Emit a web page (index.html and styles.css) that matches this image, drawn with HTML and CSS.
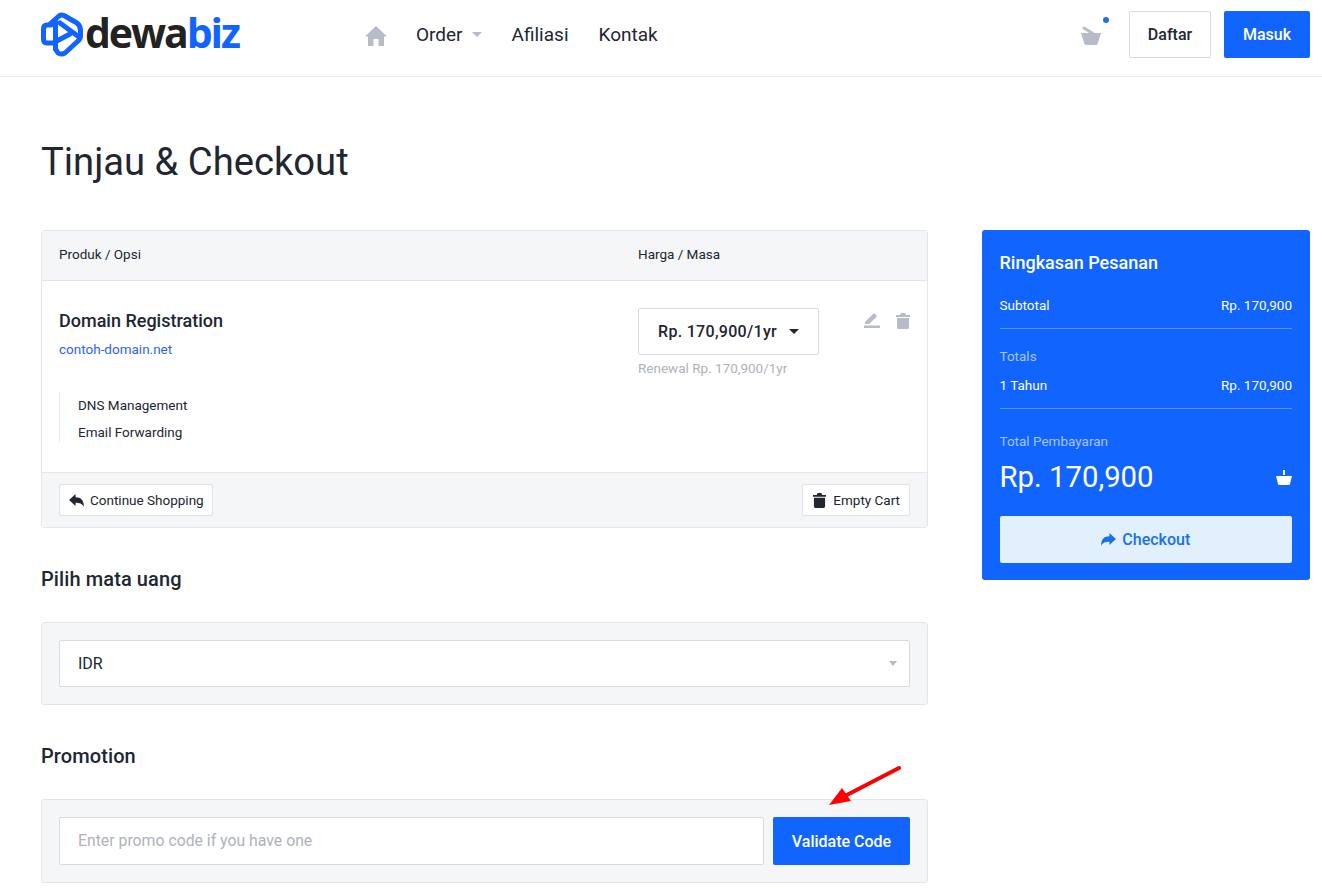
FILE: index.html
```html
<!DOCTYPE html>
<html lang="en">
<head>
    <meta charset="UTF-8">
    <meta name="viewport" content="width=device-width, initial-scale=1.0">
    <title>Tinjau &amp; Checkout</title>
    <link rel="stylesheet" href="styles.css">
</head>
<body>
    <header class="topbar">
        <a class="logo">
            <svg class="logo-mark" viewBox="0 0 42 45" width="42" height="45">
                <g fill="none" stroke="#1264ff" stroke-width="5" stroke-linecap="round" stroke-linejoin="round">
                    <path d="M10 13 H6 Q2.500 13 2.500 17 V27 Q2.500 31 6 31 H10"/>
                    <path d="M14.500 9 V37"/>
                    <path d="M9 12 L18 4 Q20 2.500 23 3.500 L36 11 Q39.500 14 39.500 18 V24 Q39.500 27 37 29 L24 41 Q20 43 17 41 L14.500 37"/>
                    <path d="M19 11 L38 25"/>
                    <path d="M12 31 L29 22"/>
                </g>
            </svg>
            <span class="logo-text">dewa<span class="logo-blue">biz</span></span>
        </a>
        <nav class="nav">
            <svg class="nav-home" viewBox="0 0 22 20" width="22" height="20"><path d="M11 0 L22 10.500 H19 V20 H13.500 V13 H8.500 V20 H3 V10.500 H0 Z" fill="#b8bcc8"/></svg>
            <a class="nav-link nav-order">Order <span class="caret caret-grey"></span></a>
            <a class="nav-link">Afiliasi</a>
            <a class="nav-link">Kontak</a>
        </nav>
        <div class="topbar-right">
            <div class="cart">
                <svg viewBox="0 0 22 19" width="22" height="19">
                    <path d="M1 7 H21 L17.500 18 Q17 19 16 19 H6 Q5 19 4.500 18 Z" fill="#b8bcc8"/>
                    <path d="M4 2 L12 7" stroke="#b8bcc8" stroke-width="3" stroke-linecap="round"/>
                </svg>
                <span class="cart-dot"></span>
            </div>
            <a class="btn btn-outline">Daftar</a>
            <a class="btn btn-primary">Masuk</a>
        </div>
    </header>

    <main class="page">
        <h1 class="title">Tinjau &amp; Checkout</h1>
        <div class="columns">
            <div class="main-col">
                <section class="card cart-table">
                    <div class="cart-head">
                        <div class="col-product">Produk / Opsi</div>
                        <div class="col-price">Harga / Masa</div>
                    </div>
                    <div class="cart-row">
                        <div class="col-product">
                            <div class="product-name">Domain Registration</div>
                            <a class="product-domain">contoh-domain.net</a>
                            <ul class="addons">
                                <li>DNS Management</li>
                                <li>Email Forwarding</li>
                            </ul>
                        </div>
                        <div class="col-price">
                            <div class="price-select">Rp. 170,900/1yr <span class="caret caret-dark"></span></div>
                            <div class="renewal">Renewal Rp. 170,900/1yr</div>
                        </div>
                        <div class="row-actions">
                            <svg viewBox="0 0 16 15" width="16" height="15"><path d="M0 12.500 H16 V15 H0 Z M1 9 L9 1 Q10 0 11 1 L12.500 2.500 Q13 3.500 12.500 4 L5 11 H1 Z" fill="#b8bcc8"/></svg>
                            <svg viewBox="0 0 14 16" width="14" height="16"><path d="M0 2 H4 L5 0 H9 L10 2 H14 V4 H0 Z M1 5 H13 V14.500 Q13 16 11.500 16 H2.500 Q1 16 1 14.500 Z" fill="#b8bcc8"/></svg>
                        </div>
                    </div>
                    <div class="cart-foot">
                        <a class="btn-small">
                            <svg viewBox="0 0 16 14" width="15" height="13"><path d="M7 0 V3.500 C13 3.500 16 7 16 14 C14.500 10.500 11 9.500 7 9.500 V13 L0 6.500 Z" fill="#212631"/></svg>
                            Continue Shopping
                        </a>
                        <a class="btn-small btn-empty">
                            <svg viewBox="0 0 14 16" width="13" height="15"><path d="M0 2 H4 L5 0 H9 L10 2 H14 V4 H0 Z M1 5 H13 V14.500 Q13 16 11.500 16 H2.500 Q1 16 1 14.500 Z" fill="#212631"/></svg>
                            Empty Cart
                        </a>
                    </div>
                </section>

                <h2 class="section-title">Pilih mata uang</h2>
                <section class="card box">
                    <div class="field field-select">IDR <span class="caret caret-small"></span></div>
                </section>

                <h2 class="section-title">Promotion</h2>
                <section class="card box promo">
                    <div class="field promo-input">Enter promo code if you have one</div>
                    <a class="btn btn-primary btn-validate">Validate Code</a>
                </section>
            </div>

            <aside class="summary">
                <h3 class="summary-title">Ringkasan Pesanan</h3>
                <div class="summary-line"><span>Subtotal</span><span>Rp. 170,900</span></div>
                <div class="summary-group">
                    <div class="summary-label">Totals</div>
                    <div class="summary-line"><span>1 Tahun</span><span>Rp. 170,900</span></div>
                </div>
                <div class="summary-total">
                    <div class="summary-label">Total Pembayaran</div>
                    <div class="total-row">
                        <span class="total-amount">Rp. 170,900</span>
                        <svg viewBox="0 0 16 15" width="16" height="15"><path d="M7 0 H9 V5 H7 Z M0 6 H16 L14 14 Q13.800 15 13 15 H3 Q2.200 15 2 14 Z" fill="#fff"/></svg>
                    </div>
                </div>
                <a class="btn-checkout">
                    <svg viewBox="0 0 16 14" width="15" height="13"><path d="M9 0 V3.500 C3 3.500 0 7 0 14 C1.500 10.500 5 9.500 9 9.500 V13 L16 6.500 Z" fill="#1673e6"/></svg>
                    Checkout
                </a>
            </aside>
        </div>
    </main>

    <svg class="arrow" viewBox="0 0 80 44" width="80" height="44">
        <path d="M70 2 L14 31" stroke="#f00" stroke-width="4" stroke-linecap="round" fill="none"/>
        <path d="M0 39 L13 22 L22 35 Z" fill="#f00"/>
    </svg>
</body>
</html>
```

FILE: styles.css
```css
body {
    margin: 0;
    font-family: 'Roboto', sans-serif;
    color: #212631;
    background: #fff;
    position: relative;
    height: 890px;
    overflow: hidden;
}
.topbar {
    height: 77px;
    box-sizing: border-box;
    border-bottom: 1px solid #e8e9eb;
    display: flex;
    align-items: center;
    padding: 0 12px 7px 41px;
}
.logo {
    display: flex;
    align-items: center;
    width: 324px;
    flex-shrink: 0;
}
.logo-mark {
    flex-shrink: 0;
}
.logo-text {
    font-family: 'Open Sans', sans-serif;
    font-weight: 700;
    font-size: 41px;
    letter-spacing: -2.1px;
    line-height: 46px;
    color: #222;
    margin: -5px 0 0 2px;
}
.logo-blue {
    color: #1264ff;
}
.nav {
    display: flex;
    align-items: center;
    gap: 30px;
    flex: 1;
}
.nav-home {
    margin-top: 2px;
}
.nav-link {
    font-size: 19px;
    color: #212631;
}
.nav-order {
    display: flex;
    align-items: center;
    gap: 9px;
    margin-left: -1px;
}
.caret {
    display: inline-block;
    width: 0;
    height: 0;
    border-left: 5px solid transparent;
    border-right: 5px solid transparent;
}
.caret-grey {
    border-top: 5px solid #b8bcc8;
}
.caret-small {
    border-left-width: 4px;
    border-right-width: 4px;
    border-top: 5px solid #b8bcc8;
}
.caret-dark {
    border-top: 5px solid #212631;
    margin-left: 9px;
    vertical-align: 2px;
}
.topbar-right {
    display: flex;
    align-items: center;
    gap: 13px;
}
.cart {
    position: relative;
    margin-right: 14px;
    display: flex;
    margin-top: 2px;
}
.cart-dot {
    position: absolute;
    top: -9px;
    right: -7px;
    width: 6px;
    height: 6px;
    border-radius: 50%;
    background: #1673e6;
}
.btn {
    display: flex;
    align-items: center;
    justify-content: center;
    height: 47px;
    box-sizing: border-box;
    border-radius: 2px;
    font-size: 16px;
    font-weight: 500;
}
.btn-outline {
    width: 82px;
    border: 1px solid #d8dade;
    color: #212631;
}
.btn-primary {
    width: 86px;
    background: #1264ff;
    color: #fff;
}
.page {
    padding: 0 12px 0 41px;
}
.title {
    margin: 0;
    padding-top: 62px;
    height: 91px;
    font-size: 38.200px;
    line-height: 46px;
    font-weight: 400;
    box-sizing: content-box;
}
.columns {
    display: flex;
    gap: 54px;
    align-items: flex-start;
}
.main-col {
    width: 887px;
    flex-shrink: 0;
}
.card {
    border: 1px solid #e4e6e9;
    border-radius: 3px;
    box-sizing: border-box;
}
.cart-table {
    height: 298px;
    display: flex;
    flex-direction: column;
}
.cart-head {
    height: 50px;
    box-sizing: border-box;
    background: #f5f6f8;
    border-bottom: 1px solid #e4e6e9;
    display: flex;
    align-items: center;
    font-size: 13.5px;
    padding: 0 0 3px 17px;
}
.col-product {
    width: 579px;
    flex-shrink: 0;
}
.cart-row {
    flex: 1;
    display: flex;
    padding: 27px 0 0 17px;
    position: relative;
}
.product-name {
    font-size: 18px;
    font-weight: 500;
    line-height: 26px;
}
.product-domain {
    display: block;
    margin-top: 5px;
    font-size: 13.5px;
    line-height: 20px;
    color: #2f63f0;
}
.addons {
    list-style: none;
    margin: 33px 0 0;
    padding: 0 0 0 18px;
    border-left: 1px solid #e4e6e9;
    height: 50px;
    font-size: 13.5px;
}
.addons li {
    line-height: 27px;
}
.price-select {
    width: 181px;
    height: 47px;
    box-sizing: border-box;
    border: 1px solid #d8dade;
    border-radius: 2px;
    display: flex;
    align-items: center;
    justify-content: center;
    font-size: 16px;
    font-weight: 500;
    letter-spacing: 0.3px;
    gap: 3px;
}
.renewal {
    margin-top: 4px;
    font-size: 13.5px;
    line-height: 18px;
    color: #aeb2bb;
}
.row-actions {
    display: flex;
    gap: 16px;
    margin-left: 45px;
    padding-top: 5px;
    align-items: flex-start;
}
.cart-foot {
    height: 55px;
    box-sizing: border-box;
    background: #f5f6f8;
    border-top: 1px solid #e4e6e9;
    display: flex;
    align-items: center;
    justify-content: space-between;
    padding: 0 17px;
}
.btn-small {
    display: flex;
    align-items: center;
    gap: 6px;
    height: 32px;
    box-sizing: border-box;
    padding: 0 8px 0 9px;
    background: #fff;
    border: 1px solid #e0e2e6;
    border-radius: 2px;
    font-size: 13.5px;
}
.btn-empty {
    gap: 7px;
    padding: 0 9px 0 10px;
}
.section-title {
    margin: 0;
    padding-top: 38px;
    height: 56px;
    font-size: 20px;
    letter-spacing: 0.1px;
    line-height: 26px;
    font-weight: 500;
    box-sizing: content-box;
}
.box {
    background: #f5f6f8;
    padding: 17px;
}
.field {
    height: 47px;
    box-sizing: border-box;
    background: #fff;
    border: 1px solid #d8dade;
    border-radius: 2px;
    display: flex;
    align-items: center;
    padding: 0 18px;
    font-size: 16px;
}
.field-select {
    justify-content: space-between;
    padding-right: 12px;
}
.promo {
    display: flex;
    gap: 9px;
}
.promo-input {
    flex: 1;
    height: 48px;
    padding-bottom: 2px;
    font-size: 15.8px;
    color: #aeb2bb;
}
.btn-validate {
    width: 137px;
    height: 48px;
}
.summary {
    width: 328px;
    height: 350px;
    box-sizing: border-box;
    background: #1264ff;
    border-radius: 3px;
    color: #fff;
    padding: 21px 18px 0 17.5px;
}
.summary-title {
    margin: 0 0 20px;
    font-size: 18px;
    line-height: 24px;
    font-weight: 500;
}
.summary-line {
    display: flex;
    justify-content: space-between;
    font-size: 13.5px;
    line-height: 20px;
}
.summary-group {
    margin-top: 13px;
    border-top: 1px solid rgba(255, 255, 255, 0.3);
    padding-top: 17px;
}
.summary-label {
    font-size: 13.5px;
    line-height: 20px;
    color: #a5c4ff;
    margin-bottom: 9px;
}
.summary-total {
    margin-top: 13px;
    border-top: 1px solid rgba(255, 255, 255, 0.3);
    padding-top: 22px;
}
.summary-total .summary-label {
    margin-bottom: 0;
}
.total-row {
    display: flex;
    justify-content: space-between;
    align-items: center;
    height: 46px;
    margin-top: 3px;
}
.total-amount {
    font-size: 29.3px;
}
.btn-checkout {
    display: flex;
    align-items: center;
    justify-content: center;
    gap: 6px;
    height: 47px;
    margin-top: 16px;
    background: #e2effc;
    border-radius: 2px;
    color: #1673e6;
    font-size: 16px;
    font-weight: 500;
}
.arrow {
    position: absolute;
    left: 829px;
    top: 766px;
}
```
